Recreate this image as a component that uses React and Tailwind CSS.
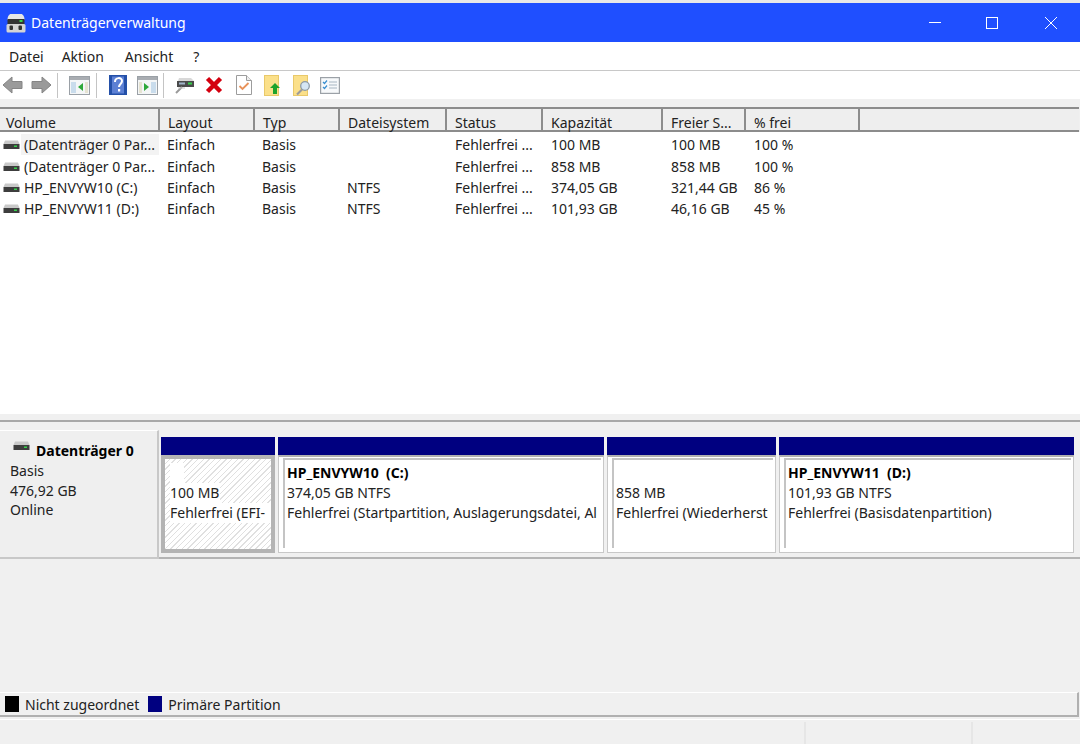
import React from 'react'

const columns = [
  { label: 'Volume', w: 'w-[160px]', body: 'w-[159px]' },
  { label: 'Layout', w: 'w-[95px]', body: 'w-[95px]' },
  { label: 'Typ', w: 'w-[85px]', body: 'w-[85px]' },
  { label: 'Dateisystem', w: 'w-[107px]', body: 'w-[108px]' },
  { label: 'Status', w: 'w-[96px]', body: 'w-[96px]' },
  { label: 'Kapazität', w: 'w-[120px]', body: 'w-[120px]' },
  { label: 'Freier S...', w: 'w-[83px]', body: 'w-[83px]' },
  { label: '% frei', w: 'w-[114px]', body: 'w-[114px]' },
]

const rows = [
  ['(Datenträger 0 Par...', 'Einfach', 'Basis', '', 'Fehlerfrei ...', '100 MB', '100 MB', '100 %'],
  ['(Datenträger 0 Par...', 'Einfach', 'Basis', '', 'Fehlerfrei ...', '858 MB', '858 MB', '100 %'],
  ['HP_ENVYW10 (C:)', 'Einfach', 'Basis', 'NTFS', 'Fehlerfrei ...', '374,05 GB', '321,44 GB', '86 %'],
  ['HP_ENVYW11 (D:)', 'Einfach', 'Basis', 'NTFS', 'Fehlerfrei ...', '101,93 GB', '46,16 GB', '45 %'],
]

function DriveIcon() {
  return (
    <svg width="17" height="10" viewBox="0 0 17 10" className="shrink-0">
      <path d="M2 0.5h13l1.5 3.5h-16z" fill="#c9c9c9" />
      <rect x="0.5" y="4" width="16" height="5" fill="#3d3d3d" />
      <rect x="11" y="5.5" width="3" height="1.5" fill="#35d04a" />
    </svg>
  )
}

function AppIcon() {
  return (
    <svg width="20" height="20" viewBox="0 0 20 20">
      <path d="M5 1h10c2 0 3.500 2.500 3.500 6H1.500C1.500 3.500 3 1 5 1z" fill="#e6e6e6" />
      <rect x="1.500" y="6" width="17" height="5" fill="#333" />
      <rect x="13.500" y="7" width="3" height="2" fill="#38d24d" />
      <rect x="0.500" y="11" width="19" height="8.500" rx="1.500" fill="#d4d4d4" />
      <rect x="3.500" y="12.500" width="3.500" height="4.500" rx="1" fill="#333" />
      <rect x="12.500" y="12.500" width="3.500" height="4.500" rx="1" fill="#333" />
    </svg>
  )
}

function Arrow({ flip }) {
  return (
    <svg width="21" height="18" viewBox="0 0 21 18" className={flip ? '-scale-x-100' : ''}>
      <path d="M1 9l9-8v4.500h10v7H10V17z" fill="#9a9a9a" stroke="#858585" />
    </svg>
  )
}

function Sep() {
  return <div className="w-px h-[25px] bg-[#c4c4c4] mx-[5px]" />
}

function PaneIcon({ right }) {
  return (
    <svg width="21" height="19" viewBox="0 0 21 19">
      <rect x="0.500" y="0.500" width="20" height="18" fill="#f4f6f7" stroke="#9aa0a6" />
      <rect x="1" y="1" width="19" height="3" fill="#a9adb2" />
      {right ? (
        <>
          <rect x="2" y="6" width="3" height="11" fill="#e6e3d2" />
          <path d="M7 7v8l5-4z" fill="#2ea83a" />
          <rect x="14" y="6" width="5" height="11" fill="#c9dcec" />
        </>
      ) : (
        <>
          <rect x="2" y="6" width="5" height="11" fill="#c9dcec" />
          <path d="M14 7v8l-5-4z" fill="#2ea83a" />
          <rect x="16" y="6" width="3" height="11" fill="#e6e3d2" />
        </>
      )}
    </svg>
  )
}

function HelpIcon() {
  return (
    <svg width="18" height="20" viewBox="0 0 18 20">
      <rect width="18" height="20" fill="#2450a8" />
      <rect x="3" y="1.500" width="12" height="17" fill="#5c80d4" />
      <path d="M6 7c0-5 7-5 7-1 0 3-3 3-3 6" fill="none" stroke="#fff" strokeWidth="2" />
      <rect x="9" y="14" width="2.200" height="2.500" fill="#fff" />
    </svg>
  )
}

function ConnectIcon() {
  return (
    <svg width="20" height="20" viewBox="0 0 20 20">
      <path d="M4 3h12l3 3H3z" fill="#d8d8d8" />
      <rect x="2" y="6" width="17" height="6" fill="#4a4a4a" />
      <rect x="13" y="7.500" width="4" height="2" fill="#36d04a" />
      <rect x="4" y="7.500" width="6" height="2" fill="#9fb3c8" />
      <path d="M1 18l6-6" stroke="#9a9a9a" strokeWidth="2" />
      <path d="M3 13h7" stroke="#c2c2c2" strokeWidth="1" />
    </svg>
  )
}

function DeleteIcon() {
  return (
    <svg width="18" height="18" viewBox="0 0 18 18">
      <path d="M2.500 2.500l13 13M15.500 2.500l-13 13" stroke="#d4000f" strokeWidth="4.500" />
    </svg>
  )
}

function CheckDocIcon() {
  return (
    <svg width="16" height="20" viewBox="0 0 16 20">
      <path d="M0.500 0.500h10l5 5v14H0.500z" fill="#fff" stroke="#9c9c9c" />
      <path d="M10.500 0.500v5h5" fill="#eee" stroke="#9c9c9c" />
      <path d="M3.500 11l3 3 6-6" fill="none" stroke="#e8925a" strokeWidth="1.800" />
    </svg>
  )
}

function FolderUpIcon() {
  return (
    <svg width="17" height="21" viewBox="0 0 17 21">
      <rect x="0.500" y="0.500" width="14" height="20" fill="#fbe08a" stroke="#e9c96a" />
      <path d="M11 8l5 5h-3v6H9v-6H6z" fill="#1ea32c" />
    </svg>
  )
}

function FolderFindIcon() {
  return (
    <svg width="18" height="21" viewBox="0 0 18 21">
      <rect x="0.500" y="0.500" width="14" height="20" fill="#fbe08a" stroke="#e9c96a" />
      <circle cx="12" cy="11" r="4.300" fill="#d5e6f4" stroke="#8c9aa6" strokeWidth="1.300" />
      <path d="M9 14.500l-5 5" stroke="#9b9b9b" strokeWidth="2.200" />
    </svg>
  )
}

function ListIcon() {
  return (
    <svg width="20" height="17" viewBox="0 0 20 17">
      <rect x="0.500" y="0.500" width="19" height="16" fill="#f7f9fb" stroke="#9ba1a7" strokeWidth="1.400" />
      <path d="M3 5l1.500 1.500L7 3.500M3 10l1.500 1.500L7 8.500" fill="none" stroke="#3a8fd0" strokeWidth="1.200" />
      <path d="M9 5h8M9 8h8M9 11h8" stroke="#a7b6c2" />
    </svg>
  )
}

function HeaderCell({ label, w, first }) {
  return (
    <div className={`${w} h-full shrink-0 ${first ? 'pl-[6px]' : 'pl-[8px]'} pt-[6px] border-r-2 border-[#8c8c8c] leading-[15px] whitespace-nowrap`}>
      {label}
    </div>
  )
}

function TableRow({ row, index }) {
  return (
    <div className={`flex items-center text-[#222] ${index === 0 ? 'h-[22px] pb-[1px]' : 'h-[21px]'}`}>
      <div className={`w-[159px] shrink-0 flex items-center h-full pl-[3px] whitespace-nowrap overflow-hidden ${index === 0 ? 'bg-[linear-gradient(to_right,#fff_21px,#f3f3f3_21px)]' : ''}`}>
        <DriveIcon />
        <span className="ml-[4px]">{row[0]}</span>
      </div>
      {row.slice(1).map((cell, i) => (
        <div key={i} className={`${columns[i + 1].body} shrink-0 pl-[8px] whitespace-nowrap`}>
          {cell}
        </div>
      ))}
    </div>
  )
}

function Partition({ w, title, lines, efi }) {
  return (
    <div className={`${w} shrink-0 flex flex-col`}>
      <div className="h-[18px] bg-[#000080]" />
      {efi ? (
        <div className="h-[98px] border-[4px] border-[#b4b4b4] bg-[repeating-linear-gradient(135deg,#ffffff_0,#ffffff_3px,#e0e0e0_3px,#e0e0e0_4px)] pt-[4px] pl-[5px] overflow-hidden">
          <div className="w-[14px] h-[20px] bg-white" />
          <div className="w-fit bg-white pr-[1px] leading-[20px]">{lines[0]}</div>
          <div className="bg-white leading-[20px] whitespace-nowrap overflow-hidden">{lines[1]}</div>
        </div>
      ) : (
        <div className="h-[98px] bg-white border-t-2 border-t-[#b0b0b0] border-x border-b border-[#c8c8c8] pl-[4px] pt-[1px] pr-[2px] pb-[4px]">
          <div className="h-full border-t-2 border-l-2 border-[#c4c4c4] pl-[2px] pt-[3px] leading-[20px] whitespace-nowrap overflow-hidden">
            <div className="h-[20px] font-bold text-black whitespace-pre">{title}</div>
            {lines.map((l) => (
              <div key={l}>{l}</div>
            ))}
          </div>
        </div>
      )}
    </div>
  )
}

export default function App() {
  return (
    <div className="w-[1080px] h-[744px] overflow-hidden bg-[#f0f0f0] text-[14px] text-[#222] font-['Noto_Sans','Open_Sans',sans-serif] flex flex-col">
      <div className="h-[3px] bg-[#e8e8e8] shrink-0" />
      {/* title bar */}
      <div className="h-[39px] bg-[#1f4fff] text-white flex items-center shrink-0">
        <div className="ml-[6px]">
          <AppIcon />
        </div>
        <span className="ml-[5px] text-[14px]">Datenträgerverwaltung</span>
        <div className="ml-auto flex items-center">
          <div className="w-[12px] h-px bg-white mr-[45px]" />
          <div className="w-[12px] h-[12px] border border-white mr-[47px]" />
          <svg width="12" height="12" viewBox="0 0 12 12" className="mr-[23px]">
            <path d="M0 0l12 12M12 0L0 12" stroke="#fff" strokeWidth="1" />
          </svg>
        </div>
      </div>
      {/* menu */}
      <div className="h-[28px] bg-white flex items-center pl-[9px] shrink-0">
        <span>Datei</span>
        <span className="ml-[18px]">Aktion</span>
        <span className="ml-[21px]">Ansicht</span>
        <span className="ml-[20px]">?</span>
      </div>
      <div className="h-px bg-[#c8c8c8] shrink-0" />
      {/* toolbar */}
      <div className="h-[28px] bg-white flex items-center pl-[2px] shrink-0">
        <Arrow />
        <div className="w-[8px]" />
        <Arrow flip />
        <Sep />
        <div className="ml-[6px]"><PaneIcon /></div>
        <div className="ml-[1px]"><Sep /></div>
        <div className="ml-[7px]"><HelpIcon /></div>
        <div className="ml-[10px]"><PaneIcon right /></div>
        <Sep />
        <div className="ml-[6px]"><ConnectIcon /></div>
        <div className="ml-[10px]"><DeleteIcon /></div>
        <div className="ml-[13px]"><CheckDocIcon /></div>
        <div className="ml-[12px]"><FolderUpIcon /></div>
        <div className="ml-[12px]"><FolderFindIcon /></div>
        <div className="ml-[9px]"><ListIcon /></div>
      </div>
      <div className="h-[8px] shrink-0" />
      {/* volume table */}
      <div className="h-[25px] shrink-0 flex border-t-2 border-b-2 border-[#8c8c8c] w-[1079px] bg-[#eeeeee]">
        {columns.map((c, i) => (
          <HeaderCell key={c.label} label={c.label} w={c.w} first={i === 0} />
        ))}
      </div>
      <div className="h-[282px] bg-white shrink-0 pt-[2px]">
        {rows.map((row, i) => (
          <TableRow key={i} row={row} index={i} />
        ))}
      </div>
      <div className="h-[6px] shrink-0" />
      <div className="h-[2px] bg-[#a8a8a8] shrink-0" />
      {/* disk view */}
      <div className="h-[137px] shrink-0 flex pt-[8px]">
        <div className="w-[159px] h-[129px] shrink-0 bg-[#efefef] border-r-2 border-b-2 border-[#c8c8c8] border-t border-t-white pl-[10px] pt-[8px] leading-[20px]">
          <div className="flex items-center font-bold text-black pl-[3px] h-[22px] pt-[2px]">
            <div className="-mt-[10px]">
              <DriveIcon />
            </div>
            <span className="ml-[6px]">Datenträger 0</span>
          </div>
          <div>Basis</div>
          <div>476,92 GB</div>
          <div className="-mt-[1px]">Online</div>
        </div>
        <div className="w-[921px] h-[129px] border-b-2 border-[#b4b4b4] pt-[7px] pl-[2px] flex gap-[3px]">
          <Partition w="w-[114px]" efi lines={['100 MB', 'Fehlerfrei (EFI-']} />
          <Partition w="w-[326px]" title="HP_ENVYW10  (C:)" lines={['374,05 GB NTFS', 'Fehlerfrei (Startpartition, Auslagerungsdatei, Al']} />
          <Partition w="w-[169px]" title="" lines={['858 MB', 'Fehlerfrei (Wiederherst']} />
          <Partition w="w-[295px]" title="HP_ENVYW11  (D:)" lines={['101,93 GB NTFS', 'Fehlerfrei (Basisdatenpartition)']} />
        </div>
      </div>
      <div className="h-[133px] shrink-0" />
      {/* legend */}
      <div className="h-[25px] shrink-0 w-[1079px] border-t border-t-white border-b-2 border-b-[#b0b0b0] border-r-2 border-r-[#b0b0b0] flex items-center pl-[5px]">
        <div className="w-[14px] h-[16px] bg-black" />
        <span className="ml-[6px]">Nicht zugeordnet</span>
        <div className="ml-[9px] w-[14px] h-[16px] bg-[#000080]" />
        <span className="ml-[6px]">Primäre Partition</span>
      </div>
      <div className="h-[2px] shrink-0" />
      <div className="h-px bg-white shrink-0" />
      {/* status bar */}
      <div className="flex-1 flex pt-[2px]">
        <div className="w-[806px] border-r-2 border-[#e6e6e6]" />
        <div className="w-[167px] border-r-2 border-[#e6e6e6]" />
      </div>
    </div>
  )
}
